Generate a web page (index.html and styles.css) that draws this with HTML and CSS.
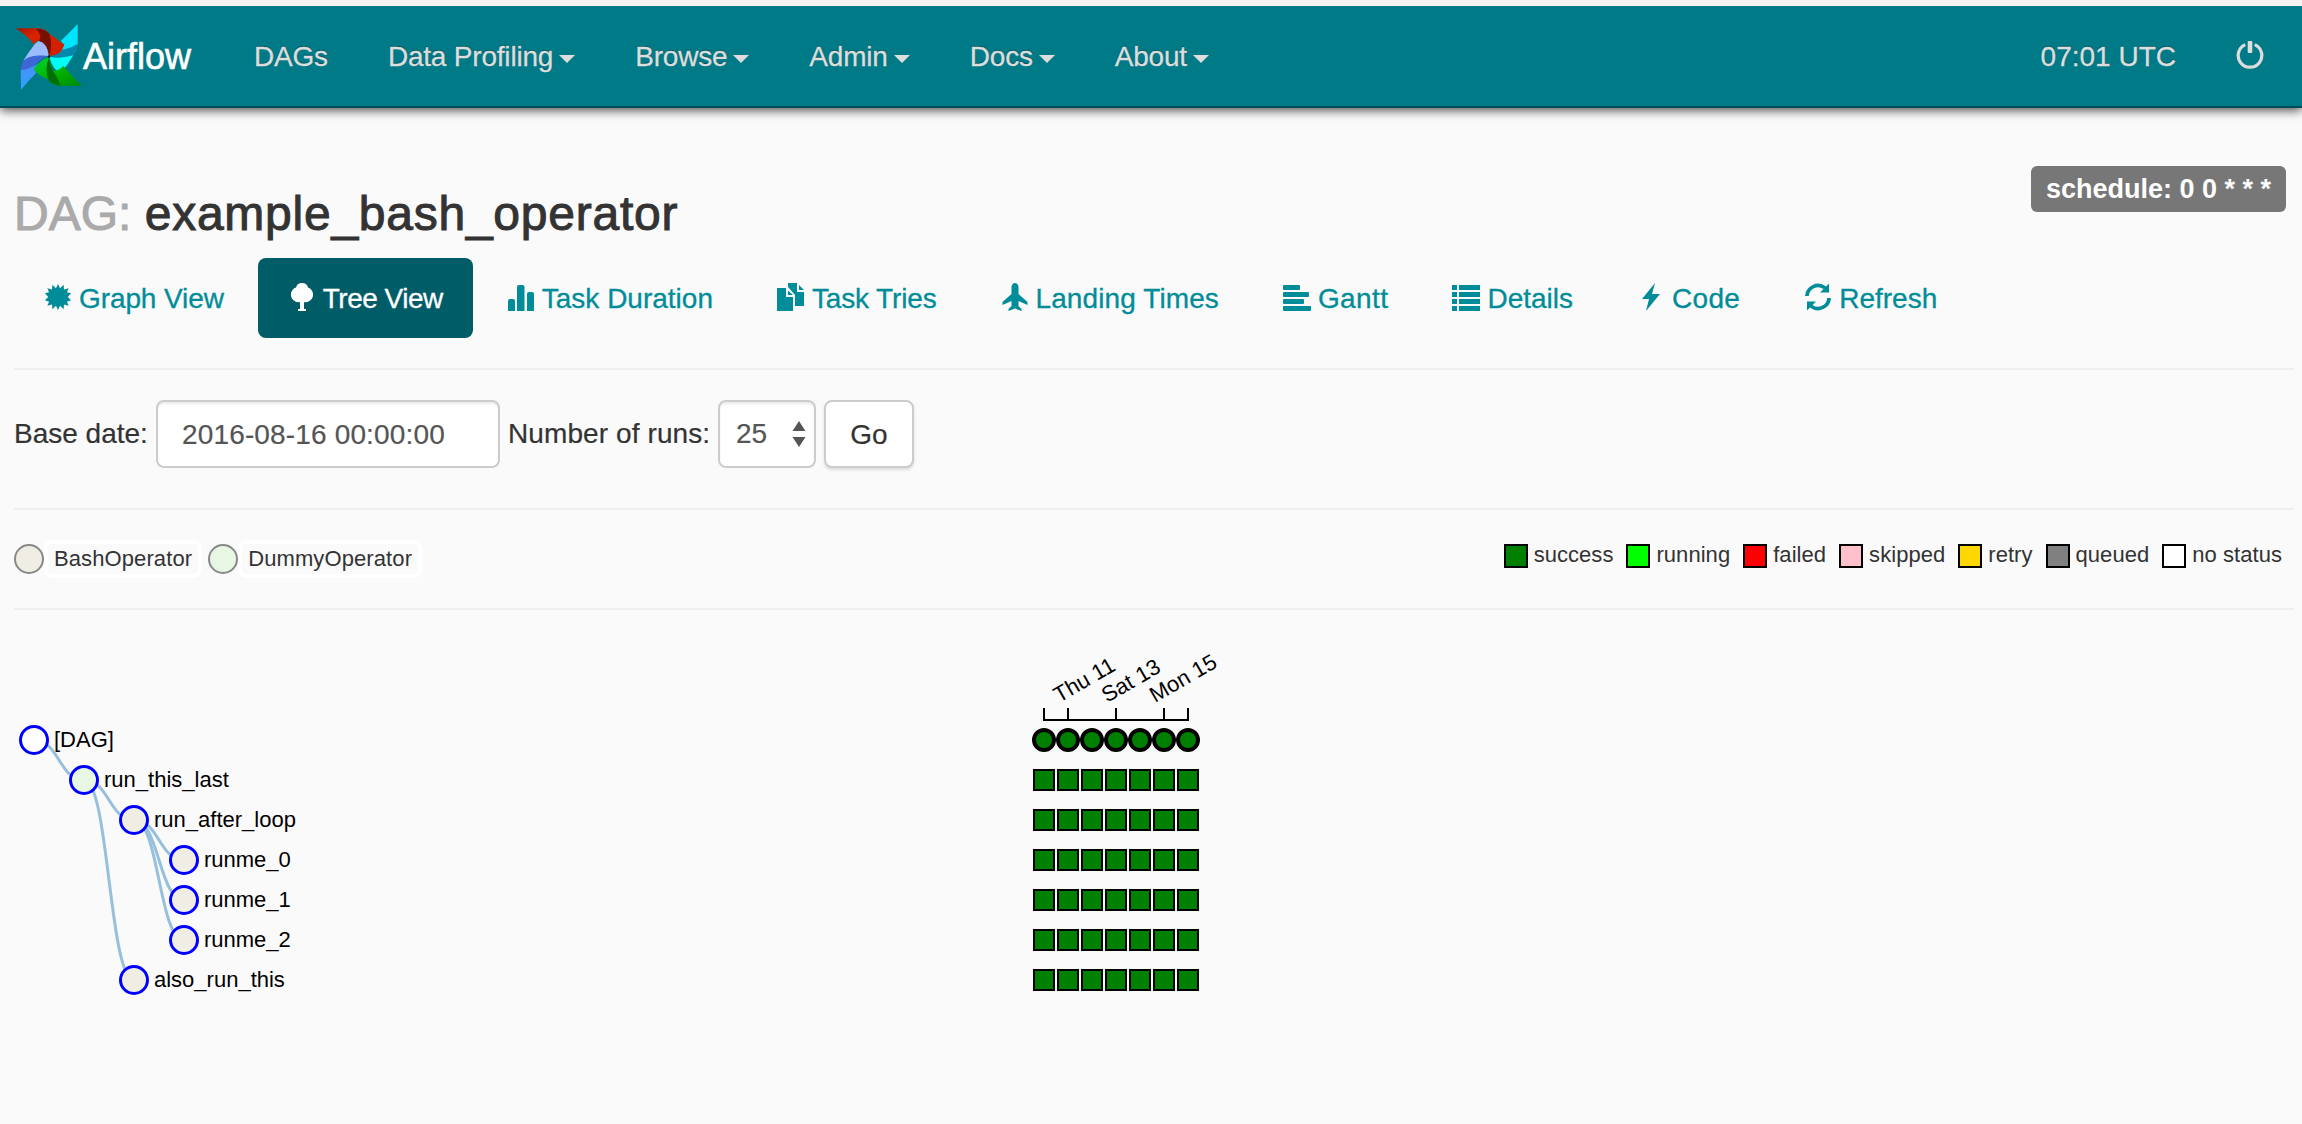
FILE: index.html
```html
<!DOCTYPE html>
<html lang="en">
<head>
<meta charset="utf-8">
<title>Airflow - DAGs</title>
<link rel="stylesheet" href="styles.css">
</head>
<body>
<header class="navbar">
  <a class="brand">
    <svg class="logo" viewBox="21 24 204 204">
      <defs>
        <linearGradient id="sky" x1="0" y1="0" x2="0" y2="1"><stop offset="0" stop-color="#4f8cf5"/><stop offset="1" stop-color="#2ba4ff"/></linearGradient>
        <linearGradient id="leaf" x1="0" y1="0" x2="1" y2="1"><stop offset="0" stop-color="#00d632"/><stop offset=".5" stop-color="#00b400"/><stop offset="1" stop-color="#008a00"/></linearGradient>
        <linearGradient id="flame" x1="0" y1="0" x2="1" y2="1"><stop offset="0" stop-color="#a01400"/><stop offset=".3" stop-color="#d82200"/><stop offset="1" stop-color="#d02000"/></linearGradient>
      </defs>
      <path d="M209 24V86Q195 95 180 98Q150 105 124 121Q150 115 169 86L158 75Q185 50 209 24Z" fill="#00e5ff"/>
      <path d="M208 84Q210 105 196 118Q160 128 124 121Q145 105 175 98Q195 93 208 84Z" fill="#0787ad"/>
      <path d="M124 122Q155 130 196 118Q180 145 160 170Q135 165 124 122Z" fill="#00fff6"/>
      <path d="M23 37H90Q112 38 122 52L169 86Q162 106 150 113Q136 118 123 120Q122 100 108 82L92 75Q85 72 78 86Q60 60 23 37Z" fill="url(#flame)"/>
      <path d="M84 38Q112 38 123 52Q135 80 124 120Q120 88 92 75Q105 60 84 38Z" fill="#761000"/>
      <path d="M92 75Q118 80 122 120Q80 115 46 134Q60 110 72 96Q82 80 92 75Z" fill="#9cbcff"/>
      <path d="M38 160Q70 158 92 140L78 158L85 170Q60 195 39 221Z" fill="url(#sky)"/>
      <path d="M122 121Q60 112 42 140L38 162Q65 160 88 140Q102 126 122 121Z" fill="#3f66d6"/>
      <path d="M78 158Q100 130 123 123Q125 145 135 165Q150 165 167 150Q185 175 222 209H155Q130 207 120 190Q85 175 78 158Z" fill="url(#leaf)"/>
      <path d="M123 123Q110 160 120 190Q132 208 158 209Q150 185 135 165Q125 145 123 123Z" fill="#007006"/>
      <circle cx="123" cy="122" r="4" fill="#031c30"/>
    </svg>
    <span class="brand-name">Airflow</span>
  </a>
  <nav class="menu">
    <a>DAGs</a>
    <a>Data Profiling<i class="caret"></i></a>
    <a>Browse<i class="caret"></i></a>
    <a>Admin<i class="caret"></i></a>
    <a>Docs<i class="caret"></i></a>
    <a>About<i class="caret"></i></a>
  </nav>
  <div class="menu menu-right">
    <a>07:01 UTC</a>
    <a class="power"><svg viewBox="0 0 28 28"><path d="M9.3 3.6A11.8 11.8 0 1 0 18.7 3.6" fill="none" stroke="currentColor" stroke-width="3.2"/><rect x="11.7" y="0" width="4.6" height="12" rx="1" fill="currentColor"/></svg></a>
  </div>
</header>
<main class="container">
  <div class="heading">
    <h3><span class="muted">DAG:</span> <span class="dag-name">example_bash_operator</span></h3>
    <span class="label">schedule: 0 0 * * *</span>
  </div>
  <ul class="pills">
    <li class="graph"><svg viewBox="-1 -1 30 30"><path d="M14 0L16.200 4.600L20 1L20.400 6L25.400 4.500L23.600 9L28 10L24.500 14L28 17.500L23.600 19L25.400 23.500L20.400 22L20 27L16.200 23.400L14 28L11.800 23.400L8 27L7.600 22L2.600 23.500L4.400 19L0 17.500L3.500 14L0 10L4.400 9L2.600 4.500L7.600 6L8 1L11.800 4.600Z"/></svg>Graph View</li>
    <li class="active"><svg viewBox="0 0 28 28"><path d="M14 0C17.500 0 19.500 2 20 4.500C23 5.500 25.500 8.500 25 12.500C24.500 17 20 20 16 19V26H18V28H10V26H12V19C8 20 3.500 17 3 12.500C2.500 8.500 5 5.500 8 4.500C8.500 2 10.500 0 14 0Z"/></svg>Tree View</li>
    <li><svg viewBox="0 0 28 28"><path d="M1 28V18Q1 16 3 16H6Q8 16 8 18V28ZM10 28V4Q10 2 12 2H15.500Q17.500 2 17.500 4V28ZM20 28V11Q20 9 22 9H25Q27 9 27 11V28Z"/></svg>Task Duration</li>
    <li class="tries"><svg viewBox="0 0 28 28"><path d="M0 5H9V14H16V28H0ZM11 7.500L16 12H11ZM11 0H20V9H27V23H18V12L11 4ZM22 2L27 7H22Z"/></svg>Task Tries</li>
    <li class="landing"><svg viewBox="0 0 28 28"><path d="M14 0C16 0 17.500 2 17.500 4V11L26.500 19V22L17.500 18V23L20.500 26V28L14 25.500L7.500 28V26L10.500 23V18L1.500 22V19L10.500 11V4C10.500 2 12 0 14 0Z"/></svg>Landing Times</li>
    <li class="gantt"><svg viewBox="0 0 28 28"><rect y="2" width="17" height="5" rx="1"/><rect y="9" width="26" height="5" rx="1"/><rect y="16" width="21" height="5" rx="1"/><rect y="23" width="28" height="5" rx="1"/></svg>Gantt</li>
    <li><svg viewBox="0 0 28 28"><path d="M0 2H5V7H0ZM7 2H28V7H7ZM0 9H5V14H0ZM7 9H28V14H7ZM0 16H5V21H0ZM7 16H28V21H7ZM0 23H5V28H0ZM7 23H28V28H7Z"/></svg>Details</li>
    <li class="code"><svg viewBox="0 0 28 28"><path d="M18 0L5 16H12L9 28L23 11H15Z"/></svg>Code</li>
    <li><svg viewBox="0 0 28 28"><path d="M1 13A13 13 0 0 1 22 3.500L25 0.500V9.500H16L19.500 6A9.300 9.300 0 0 0 4.800 13ZM27 15A13 13 0 0 1 6 24.500L3 27.500V18.500H12L8.500 22A9.300 9.300 0 0 0 23.200 15Z"/></svg>Refresh</li>
  </ul>
  <hr class="rule">
  <form class="filters">
    <span class="base">Base date:</span>
    <span class="field date">2016-08-16 00:00:00</span>
    <span class="runs">Number of runs:</span>
    <span class="field select">25<svg viewBox="0 0 14 26"><path d="M7 0L13.500 10H.5ZM.5 16H13.500L7 26Z"/></svg></span>
    <span class="field go">Go</span>
  </form>
  <hr class="rule">
  <div class="legends">
    <div class="operators">
      <i class="dot bash"></i><span class="op">BashOperator</span>
      <i class="dot dummy"></i><span class="op">DummyOperator</span>
    </div>
    <div class="states">
      <span><i class="s-success"></i>success</span>
      <span><i class="s-running"></i>running</span>
      <span><i class="s-failed"></i>failed</span>
      <span><i class="s-skipped"></i>skipped</span>
      <span><i class="s-retry"></i>retry</span>
      <span><i class="s-queued"></i>queued</span>
      <span><i class="s-none"></i>no status</span>
    </div>
  </div>
  <hr class="rule">
  <svg class="tree" width="2274" height="500" viewBox="14 620 2274 500">
    <defs>
      <g id="row">
        <rect x="-10" y="-10" width="20" height="20"/><rect x="14" y="-10" width="20" height="20"/><rect x="38" y="-10" width="20" height="20"/><rect x="62" y="-10" width="20" height="20"/><rect x="86" y="-10" width="20" height="20"/><rect x="110" y="-10" width="20" height="20"/><rect x="134" y="-10" width="20" height="20"/>
      </g>
    </defs>
    <g class="link">
      <path d="M34 740C59 740 59 780 84 780"/>
      <path d="M84 780C109 780 109 820 134 820"/>
      <path d="M84 780C109 780 109 980 134 980"/>
      <path d="M134 820C159 820 159 860 184 860"/>
      <path d="M134 820C159 820 159 900 184 900"/>
      <path d="M134 820C159 820 159 940 184 940"/>
    </g>
    <g class="node">
      <circle class="root" cx="34" cy="740" r="13.500"/><circle class="dummy" cx="84" cy="780" r="13.500"/>
      <circle cx="134" cy="820" r="13.500"/><circle cx="184" cy="860" r="13.500"/><circle cx="184" cy="900" r="13.500"/><circle cx="184" cy="940" r="13.500"/><circle cx="134" cy="980" r="13.500"/>
    </g>
    <g class="name">
      <text x="54" y="747">[DAG]</text><text x="104" y="787">run_this_last</text><text x="154" y="827">run_after_loop</text>
      <text x="204" y="867">runme_0</text><text x="204" y="907">runme_1</text><text x="204" y="947">runme_2</text><text x="154" y="987">also_run_this</text>
    </g>
    <path class="axis" d="M1044 708V720H1188V708M1068 708V720M1116 708V720M1164 708V720"/>
    <g class="tick">
      <text transform="translate(1059 703) rotate(-30)">Thu 11</text>
      <text transform="translate(1107 703) rotate(-30)">Sat 13</text>
      <text transform="translate(1155 703) rotate(-30)">Mon 15</text>
    </g>
    <g class="run">
      <circle cx="1044" cy="740" r="10"/><circle cx="1068" cy="740" r="10"/><circle cx="1092" cy="740" r="10"/><circle cx="1116" cy="740" r="10"/><circle cx="1140" cy="740" r="10"/><circle cx="1164" cy="740" r="10"/><circle cx="1188" cy="740" r="10"/>
    </g>
    <g class="task">
      <use href="#row" x="1044" y="780"/><use href="#row" x="1044" y="820"/><use href="#row" x="1044" y="860"/><use href="#row" x="1044" y="900"/><use href="#row" x="1044" y="940"/><use href="#row" x="1044" y="980"/>
    </g>
  </svg>
</main>
</body>
</html>
```
FILE: styles.css
```css
* { box-sizing: border-box; }
body {
  margin: 0;
  height: 1124px;
  overflow: hidden;
  background: #fafafa;
  color: #333;
  font: 28px/40px "Liberation Sans", Arial, sans-serif;
}
.navbar {
  display: flex;
  height: 108px;
  padding-left: 15px;
  background: #007a87;
  border-top: 6px solid #f4f4f4;
  border-bottom: 2px solid #004d57;
  box-shadow: 0 2px 10px rgba(0, 0, 0, .75);
}
.brand { display: flex; width: 209px; }
.logo { width: 68px; height: 68px; margin-top: 18px; }
.brand-name { color: #fff; font-size: 36px; line-height: 101px; -webkit-text-stroke: .6px #fff; }
.menu { display: flex; letter-spacing: -.2px; }
.menu a {
  display: flex;
  align-items: center;
  height: 100px;
  padding: 2px 30px 0;
  color: #ddd;
  text-shadow: 0 -1px 1px rgba(0, 0, 0, .35);
  -webkit-text-stroke: .3px #ddd;
}
.menu-right { margin-left: auto; padding-right: 8px; letter-spacing: 0; }
.caret { margin: 4px 0 0 6px; border: 8px solid transparent; border-top-color: #ddd; border-bottom: 0; }
.power svg { width: 28px; height: 28px; margin-top: -5px; }
.container { padding: 0 8px 0 14px; }
.heading { display: flex; justify-content: space-between; align-items: flex-start; height: 150px; }
h3 { margin: 79px 0 0; font-size: 48px; line-height: 53px; font-weight: 400; -webkit-text-stroke: 1px currentColor; }
.muted { color: #aaa; }
.dag-name { letter-spacing: .75px; }
.label {
  height: 46px;
  margin: 58px 8px 0 0;
  padding: 0 15px;
  border-radius: 6px;
  background: #777;
  color: #fff;
  font-weight: 700;
  font-size: 27px;
  line-height: 46px;
}
.pills { display: flex; gap: 4px; margin: 0; padding: 0; list-style: none; color: #008c99; }
.pills li { display: flex; align-items: center; height: 80px; padding: 2px 30px 0; border-radius: 8px; -webkit-text-stroke: .3px currentColor; }
.pills svg { width: 28px; height: 28px; margin: -5px 7px 0 0; fill: currentColor; stroke: none; }
.pills .active { background: #005c66; color: #fff; letter-spacing: -.5px; }
.pills .graph { letter-spacing: -.1px; }
.pills .tries { letter-spacing: -.15px; }
.pills .landing { letter-spacing: .1px; }
.pills .gantt { letter-spacing: .4px; }
.pills .code { letter-spacing: .3px; }
.rule { height: 2px; margin: 0; border: 0; background: #eee; }
.pills + .rule { margin-top: 30px; }
.filters { display: flex; height: 138px; padding-top: 30px; line-height: 67px; -webkit-text-stroke: .2px currentColor; }
.base { width: 142px; }
.field { height: 68px; background: #fff; border: 2px solid #ccc; border-radius: 8px; color: #555; line-height: 66px; box-shadow: inset 0 2px 2px rgba(0, 0, 0, .075); }
.date { width: 344px; padding-left: 24px; letter-spacing: .15px; }
.runs { width: 218px; padding-left: 8px; letter-spacing: .1px; }
.select { display: flex; align-items: center; justify-content: space-between; width: 98px; padding: 0 8px 0 16px; }
.select svg { width: 14px; height: 26px; fill: #555; stroke: none; }
.go { width: 90px; margin-left: 8px; color: #333; text-align: center; box-shadow: 0 2px 3px rgba(0, 0, 0, .12); }
.legends { display: flex; justify-content: space-between; height: 98px; font-size: 22px; }
.operators { display: flex; padding-top: 30px; }
.dot { width: 30px; height: 30px; margin-top: 4px; border: 2px solid #888; border-radius: 50%; background: #f0ede4; }
.dot.dummy { background: #e8f7e4; }
.op { height: 38px; margin-right: 6px; padding: 0 6px; border: 4px solid #fff; border-radius: 8px; line-height: 29px; letter-spacing: .1px; }
.states { display: flex; gap: 13px; padding: 34px 12px 0 0; line-height: 22px; letter-spacing: .05px; }
.states span { display: flex; }
.states i { width: 24px; height: 24px; margin-right: 6px; border: 2px solid #000; }
.s-success { background: green; }
.s-running { background: lime; }
.s-failed { background: red; }
.s-skipped { background: pink; }
.s-retry { background: gold; }
.s-queued { background: gray; }
.s-none { background: #fff; }
.tree { display: block; margin-top: 10px; font-size: 22px; }
.link { fill: none; stroke: #96c0dc; stroke-width: 3; }
.node { fill: #f0ede4; stroke: #00f; stroke-width: 3; }
.node .root { fill: #fff; }
.node .dummy { fill: #e8f7e4; }
.name, .tick { fill: #000; }
.axis { fill: none; stroke: #000; stroke-width: 2; }
.run { fill: green; stroke: #000; stroke-width: 4; }
.task { fill: green; stroke: #000; stroke-width: 2; }
```
